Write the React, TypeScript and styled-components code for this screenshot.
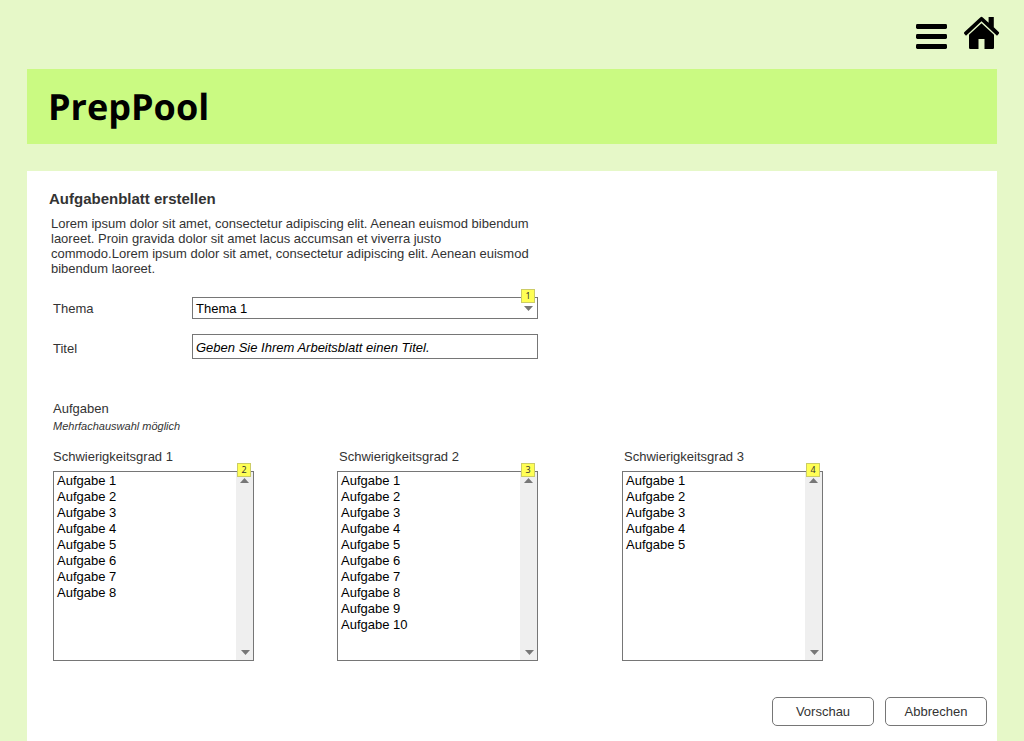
import React from "react";
import styled, { createGlobalStyle } from "styled-components";

const GlobalStyle = createGlobalStyle`
  * { box-sizing: border-box; }
  body {
    margin: 0;
    background: #e6f8c8;
    color: #333;
    font: 13px/15px "Liberation Sans", Arial, sans-serif;
  }
`;

const Page = styled.div`
  display: flex;
  flex-direction: column;
  height: 741px;
  padding: 0 27px;
  overflow: hidden;
`;

const TopBar = styled.nav`
  display: flex;
  justify-content: flex-end;
  height: 69px;
  padding-top: 16px;
  margin-right: -3px;
  gap: 16px;
  flex: none;
`;

const Banner = styled.header`
  display: flex;
  align-items: center;
  flex: none;
  height: 75px;
  margin-bottom: 27px;
  padding-left: 21px;
  background: #cafa82;
`;

const Brand = styled.h1`
  margin: 0;
  color: #000;
  font: bold 36px/49px "Open Sans", sans-serif;
  text-rendering: geometricPrecision;
`;

const Panel = styled.main`
  flex: 1;
  display: flex;
  flex-direction: column;
  padding: 19px 10px 0 26px;
  background: #fff;
`;

const Heading = styled.h2`
  margin: 0 0 8px -4px;
  font-size: 15px;
  line-height: 18px;
`;

const Intro = styled.p`
  width: 490px;
  margin: 0 0 21px -2px;
`;

const FieldRow = styled.div`
  display: grid;
  grid-template-columns: 139px 346px;
  align-items: center;
  margin-bottom: 15px;
`;

const Label = styled.label<{ $drop?: number }>`
  padding-top: ${(p) => p.$drop ?? 0}px;
`;

const Box = styled.div<{ $height: number }>`
  position: relative;
  display: flex;
  align-items: center;
  height: ${(p) => p.$height}px;
  padding-left: 3px;
  border: 1px solid #767676;
  color: #000;
`;

const Placeholder = styled.em`
  padding-top: 2px;
`;

const SelectArrow = styled.span`
  display: flex;
  margin: 1px 4px 0 auto;
`;

const Note = styled.span`
  position: absolute;
  top: -9px;
  right: 2px;
  width: 14px;
  height: 14px;
  border: 1px solid #cccc66;
  background: #ffff55;
  color: #333;
  font: 9px/12px "Noto Sans", sans-serif;
  text-align: center;
`;

const SectionTitle = styled.div`
  margin-top: 27px;
`;

const Hint = styled.em`
  margin-top: 4px;
  font-size: 11px;
  line-height: 13px;
`;

const Columns = styled.div`
  display: grid;
  grid-template-columns: 284px 285px 201px;
  margin-top: 16px;
`;

const Column = styled.section`
  width: 201px;
`;

const ColumnTitle = styled.div<{ $indent: number }>`
  padding-left: ${(p) => p.$indent}px;
  margin-bottom: 7px;
`;

const ListBox = styled.div`
  position: relative;
  display: flex;
  justify-content: space-between;
  height: 190px;
  border: 1px solid #767676;
`;

const Options = styled.ul`
  margin: 0;
  padding: 1px 0 0 3px;
  list-style: none;
  color: #000;
  line-height: 16px;
`;

const Scrollbar = styled.div`
  display: flex;
  flex-direction: column;
  justify-content: space-between;
  align-items: flex-start;
  width: 17px;
  padding: 6px 0 5px 4px;
  background: #efefef;

  svg:last-child {
    margin-left: 1px;
  }
`;

const Actions = styled.div`
  display: flex;
  justify-content: flex-end;
  gap: 11px;
  margin-top: 36px;
`;

const Button = styled.button`
  width: 102px;
  height: 29px;
  padding: 0;
  border: 1px solid #767676;
  border-radius: 5px;
  background: #fff;
  color: #333;
  font: inherit;
`;

const Arrow = ({ up = false }: { up?: boolean }) => (
  <svg width="9" height="5" viewBox="0 0 9 5" fill="#777">
    <path d={up ? "M0 5L4.5 0L9 5Z" : "M0 0H9L4.5 5Z"} />
  </svg>
);

const MenuIcon = () => (
  <svg width="32" height="34" viewBox="0 0 32 34">
    <rect y="8" width="31" height="5" rx="1.4" />
    <rect y="18" width="31" height="5" rx="1.4" />
    <rect y="28" width="31" height="5" rx="1.4" />
  </svg>
);

const HomeIcon = () => (
  <svg width="36" height="34" viewBox="0 0 36 34">
    <path d="M17.5 .8Q18 .8 18.8 1.5L24.6 6.7V1H29.8V11.3L35 16.2Q35.3 17 34.8 17.8L33 19.7L17.5 5.3L2 19.7L.2 17.8Q-.2 17 .2 16.2L16.2 1.5Q17 .8 17.5 .8Z" />
    <path d="M17.5 7.2L30 18.8V31.7Q30 33 28.7 33H20.5V23H14.5V33H6.3Q5 33 5 31.7V18.8Z" />
  </svg>
);

const levels = [
  { level: 1, count: 8, note: 2, indent: 0 },
  { level: 2, count: 10, note: 3, indent: 2 },
  { level: 3, count: 5, note: 4, indent: 2 },
];

export default function App() {
  return (
    <>
      <GlobalStyle />
      <Page>
        <TopBar>
          <MenuIcon />
          <HomeIcon />
        </TopBar>
        <Banner>
          <Brand>PrepPool</Brand>
        </Banner>
        <Panel>
          <Heading>Aufgabenblatt erstellen</Heading>
          <Intro>
            Lorem ipsum dolor sit amet, consectetur adipiscing elit. Aenean euismod bibendum
            laoreet. Proin gravida dolor sit amet lacus accumsan et viverra justo
            commodo.Lorem ipsum dolor sit amet, consectetur adipiscing elit. Aenean euismod
            bibendum laoreet.
          </Intro>
          <FieldRow>
            <Label $drop={1}>Thema</Label>
            <Box $height={22}>
              Thema 1
              <SelectArrow>
                <Arrow />
              </SelectArrow>
              <Note>1</Note>
            </Box>
          </FieldRow>
          <FieldRow>
            <Label $drop={4}>Titel</Label>
            <Box $height={25}>
              <Placeholder>Geben Sie Ihrem Arbeitsblatt einen Titel.</Placeholder>
            </Box>
          </FieldRow>
          <SectionTitle>Aufgaben</SectionTitle>
          <Hint>Mehrfachauswahl möglich</Hint>
          <Columns>
            {levels.map(({ level, count, note, indent }) => (
              <Column key={level}>
                <ColumnTitle $indent={indent}>Schwierigkeitsgrad {level}</ColumnTitle>
                <ListBox>
                  <Options>
                    {Array.from({ length: count }, (_, i) => (
                      <li key={i}>Aufgabe {i + 1}</li>
                    ))}
                  </Options>
                  <Scrollbar>
                    <Arrow up />
                    <Arrow />
                  </Scrollbar>
                  <Note>{note}</Note>
                </ListBox>
              </Column>
            ))}
          </Columns>
          <Actions>
            <Button>Vorschau</Button>
            <Button>Abbrechen</Button>
          </Actions>
        </Panel>
      </Page>
    </>
  );
}
